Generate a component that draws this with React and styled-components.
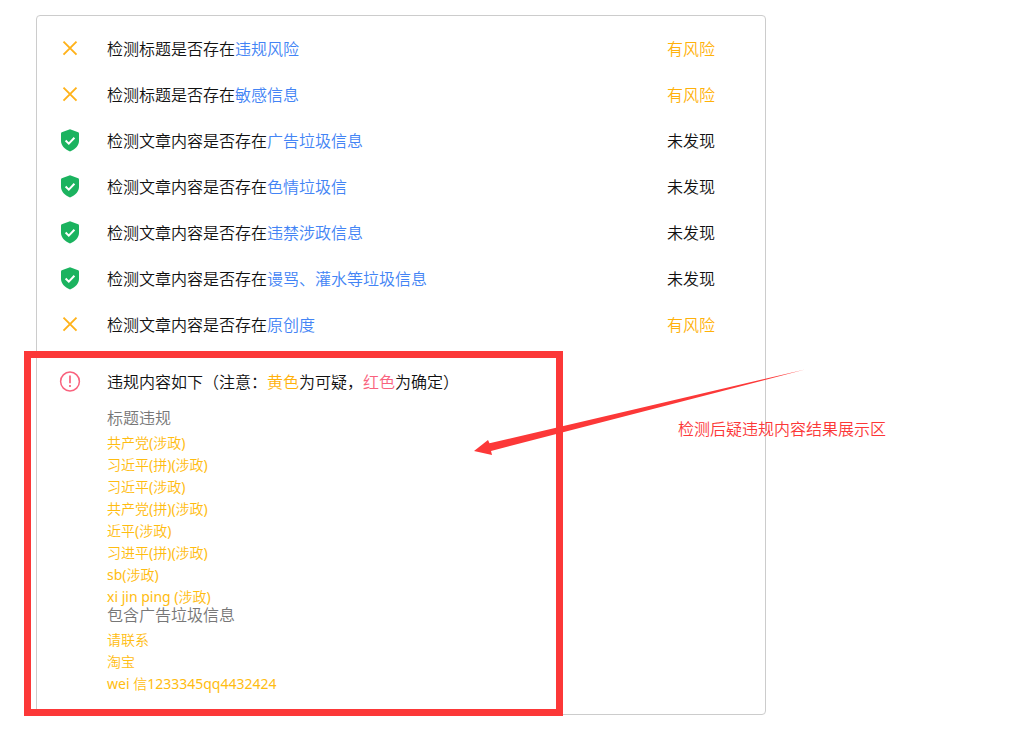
import React from "react";
import styled, { createGlobalStyle } from "styled-components";

const GlobalStyle = createGlobalStyle`
  body {
    margin: 0;
    background-color: #fff;
    color: #111;
    font-family: "Noto Sans", "Noto Sans CJK SC", sans-serif;
    font-size: 16px;
    font-weight: 350;
  }
`;

const tones = {
  yellow: "#ffb10a",
  red: "#f9627d",
  blue: "#4384f5"
};

const Page = styled.main`
  padding: 15px 36px 30px;
`;

const Card = styled.section`
  position: relative;
  box-sizing: border-box;
  max-width: 730px;
  padding-top: 10px;
  border: 1px solid #ccc;
  border-radius: 4px;
`;

const CheckList = styled.ul`
  margin: 0;
  padding: 0;
  list-style: none;
`;

const CheckRow = styled.li`
  display: grid;
  grid-template-columns: 66px 1fr 98px;
  align-items: center;
  height: 46px;
  line-height: 24px;
`;

const IconCell = styled.span`
  display: flex;
  justify-content: center;
  padding-bottom: 2px;

  svg {
    display: block;
  }
`;

const CheckText = styled.span`
  padding-left: 4px;
`;

const CheckLink = styled.a`
  color: ${tones.blue};
  text-decoration: none;
`;

const Status = styled.span`
  color: ${props => (props.$risk ? tones.yellow : "inherit")};
`;

const Report = styled.section`
  position: relative;
  padding: 11px 0 20px;
`;

const ReportHeading = styled.header`
  display: grid;
  grid-template-columns: 66px 1fr;
  align-items: center;
  height: 46px;
  margin-bottom: 5px;

  h2 {
    margin: 0;
    padding-left: 4px;
    font-size: 16px;
    font-weight: inherit;
    line-height: 24px;
  }
`;

const Tone = styled.span`
  color: ${props => tones[props.$tone]};
`;

const Group = styled.div`
  padding-left: 70px;

  h3 {
    margin: 0;
    padding-bottom: 6px;
    color: #777;
    font-size: 16px;
    font-weight: inherit;
    line-height: 16px;
  }
`;

const WordList = styled.ul`
  margin: 0 0 -1px;
  padding: 0;
  list-style: none;
  color: #ffbc10;
  font-family: "Noto Sans", "Noto Sans CJK SC DemiLight", "Noto Sans CJK SC",
    sans-serif;
  font-size: 14px;
  font-weight: 400;
  line-height: 22px;
`;

const Frame = styled.div`
  position: absolute;
  top: 3px;
  bottom: -2px;
  left: -13px;
  box-sizing: border-box;
  width: 539px;
  border: 7px solid #fc3838;
  pointer-events: none;
`;

const Arrow = styled.svg`
  position: absolute;
  top: 20px;
  left: 436px;
  pointer-events: none;
`;

const Note = styled.p`
  position: absolute;
  top: 69px;
  left: 641px;
  margin: 0;
  color: #fc3838;
  line-height: 24px;
  white-space: nowrap;
`;

const checks = [
  { subject: "标题", name: "违规风险", risk: true },
  { subject: "标题", name: "敏感信息", risk: true },
  { subject: "文章内容", name: "广告垃圾信息", risk: false },
  { subject: "文章内容", name: "色情垃圾信", risk: false },
  { subject: "文章内容", name: "违禁涉政信息", risk: false },
  { subject: "文章内容", name: "谩骂、灌水等垃圾信息", risk: false },
  { subject: "文章内容", name: "原创度", risk: true }
];

const groups = [
  {
    title: "标题违规",
    words: [
      "共产党(涉政)",
      "习近平(拼)(涉政)",
      "习近平(涉政)",
      "共产党(拼)(涉政)",
      "近平(涉政)",
      "习进平(拼)(涉政)",
      "sb(涉政)",
      "xi jin ping (涉政)"
    ]
  },
  {
    title: "包含广告垃圾信息",
    words: ["请联系", "淘宝", "wei 信1233345qq4432424"]
  }
];

function CrossIcon() {
  return (
    <svg width="24" height="24" viewBox="0 0 24 24" aria-hidden="true">
      <path
        d="M5.5 5.7 18.5 18.7M18.5 5.7 5.5 18.7"
        fill="none"
        stroke="#ffb21a"
        strokeWidth="1.9"
      />
    </svg>
  );
}

function ShieldIcon() {
  return (
    <svg width="24" height="24" viewBox="0 0 24 24" aria-hidden="true">
      <path
        d="M12 1.2L20.2 4.2Q21 4.5 21 5.4V12.8C21 17.4 17.6 21.3 12 23.5C6.4 21.3 3 17.4 3 12.8V5.4Q3 4.5 3.8 4.2Z"
        fill="#1bb35f"
      />
      <path
        d="M7.6 12.5 10.8 15.6 16.4 9.8"
        fill="none"
        stroke="#fff"
        strokeWidth="2"
      />
    </svg>
  );
}

function WarnIcon() {
  return (
    <svg width="24" height="24" viewBox="0 0 24 24" aria-hidden="true">
      <circle
        cx="12"
        cy="12.5"
        r="9.4"
        fill="none"
        stroke="#f9627d"
        strokeWidth="1.5"
      />
      <path
        d="M12 6.5V14.3M12 16V18"
        fill="none"
        stroke="#f9627d"
        strokeWidth="1.7"
      />
    </svg>
  );
}

function App() {
  return (
    <Page>
      <GlobalStyle />
      <Card>
        <CheckList>
          {checks.map(check => (
            <CheckRow key={check.name}>
              <IconCell>{check.risk ? <CrossIcon /> : <ShieldIcon />}</IconCell>
              <CheckText>
                检测{check.subject}是否存在
                <CheckLink href="#report">{check.name}</CheckLink>
              </CheckText>
              <Status $risk={check.risk}>
                {check.risk ? "有风险" : "未发现"}
              </Status>
            </CheckRow>
          ))}
        </CheckList>

        <Report id="report">
          <ReportHeading>
            <IconCell>
              <WarnIcon />
            </IconCell>
            <h2>
              违规内容如下（注意：<Tone $tone="yellow">黄色</Tone>为可疑，
              <Tone $tone="red">红色</Tone>为确定）
            </h2>
          </ReportHeading>
          {groups.map(group => (
            <Group key={group.title}>
              <h3>{group.title}</h3>
              <WordList>
                {group.words.map(word => (
                  <li key={word}>{word}</li>
                ))}
              </WordList>
            </Group>
          ))}
          <Frame />
          <Arrow width="336" height="90" viewBox="0 0 336 90" aria-hidden="true">
            <path d="M1 83 15 72 16.5 75.2 332 1.5 18 83 19 87Z" fill="#fc3838" />
          </Arrow>
          <Note>检测后疑违规内容结果展示区</Note>
        </Report>
      </Card>
    </Page>
  );
}

export default App;
